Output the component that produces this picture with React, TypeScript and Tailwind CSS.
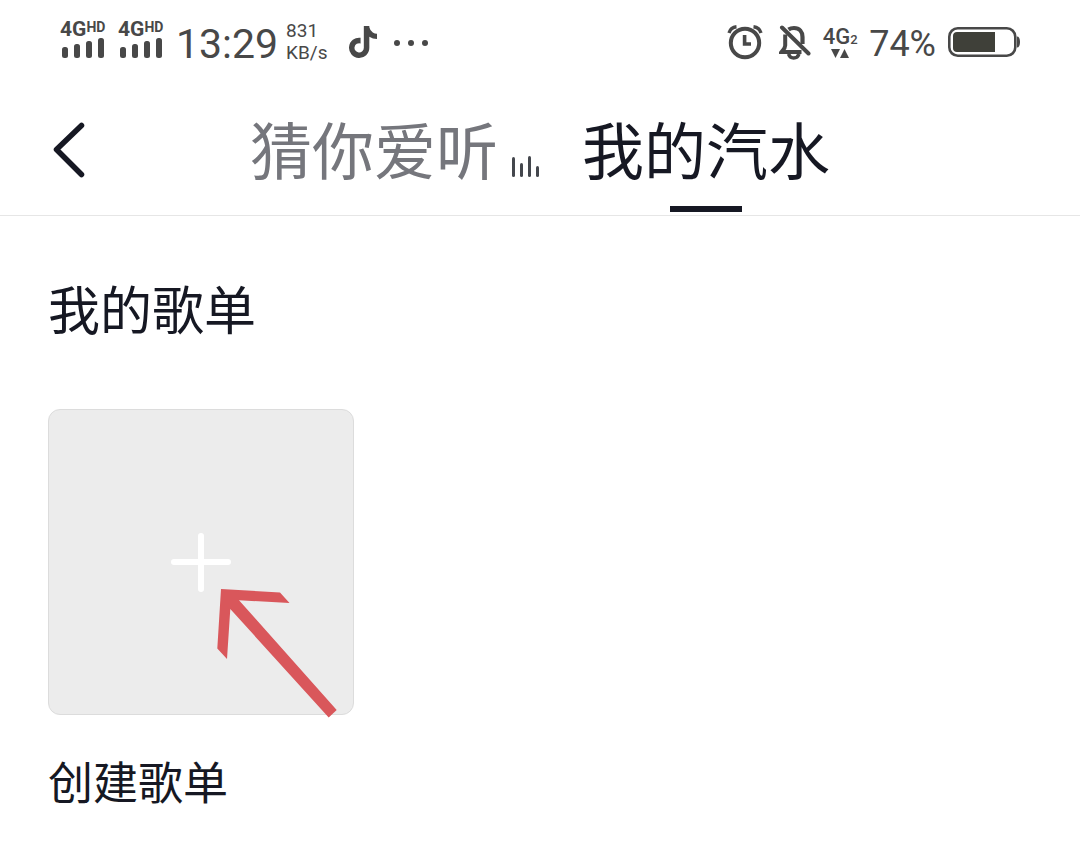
import React, { useState } from 'react';
import { FaTiktok } from 'react-icons/fa';

const SignalBars: React.FC = () => (
  <div className="flex flex-col w-[46px]">
    <div className="flex items-start font-bold">
      <span className="text-[21px] leading-[18px]">4G</span>
      <span className="text-[14px] leading-[14px]">HD</span>
    </div>
    <svg width="46" height="20" viewBox="0 0 46 20" fill="currentColor" aria-hidden="true">
      <rect x="2" y="9" width="6" height="11" rx="2.5" />
      <rect x="14" y="6" width="6" height="14" rx="2.5" />
      <rect x="26" y="3" width="6" height="17" rx="2.5" />
      <rect x="38" y="0" width="6" height="20" rx="2.5" />
    </svg>
  </div>
);

const AlarmIcon: React.FC = () => (
  <svg width="36" height="36" viewBox="0 0 36 36" fill="none" stroke="currentColor" aria-hidden="true">
    <circle cx="18" cy="19" r="14.2" strokeWidth="4" />
    <path d="M17.6 11v9h6.4" strokeWidth="3.6" />
    <path d="M2 9C3 5.500 5.500 3.200 9.500 2.800" strokeWidth="3.4" />
    <path d="M34 9C33 5.500 30.500 3.200 26.500 2.800" strokeWidth="3.4" />
  </svg>
);

const BellOffIcon: React.FC = () => (
  <svg width="32" height="36" viewBox="0 0 32 36" fill="none" stroke="currentColor" aria-hidden="true">
    <path d="M3 3.500L29.500 29.500" strokeWidth="4" strokeLinecap="round" />
    <path d="M9.500 5.500C11.300 4.300 13 4 15 4C20.500 4 23.500 8 23.500 13v7" strokeWidth="4.2" />
    <path d="M6.200 10.500v11c0 2.500-1.700 4-3.700 6.500H22.500" strokeWidth="4" />
    <path d="M9.500 30c1 2.800 2.800 4 5.200 4s4.300-1.200 5.300-4" strokeWidth="3.6" />
  </svg>
);

const BatteryIcon: React.FC = () => (
  <svg width="72" height="30" viewBox="0 0 72 30" aria-hidden="true">
    <rect x="1.300" y="1.300" width="66" height="27.400" rx="8.500" fill="none" stroke="#484848" strokeWidth="2.600" />
    <path d="M9 5H47V25H9C6.500 25 5 23.500 5 21V9C5 6.500 6.500 5 9 5Z" fill="#3f4039" />
    <path d="M69 9.500C71 9.500 72 11.500 72 15S71 20.500 69 20.500Z" fill="#484848" />
  </svg>
);

const StatusBar: React.FC = () => (
  <div className="flex items-start justify-between h-[84px] pl-[60px] pr-[60px] pt-5 text-[#484848] font-['Roboto',sans-serif]">
    <div className="flex items-start">
      <SignalBars />
      <div className="ml-3">
        <SignalBars />
      </div>
      <span className="ml-3 text-[41px] leading-[48px]">13:29</span>
      <div className="ml-2 flex flex-col text-[19px] leading-[22px]">
        <span>831</span>
        <span>KB/s</span>
      </div>
      <FaTiktok className="ml-5 mt-1.5 w-[30px] h-8" />
      <svg className="ml-4 mt-5" width="34" height="6" viewBox="0 0 34 6" fill="currentColor" aria-hidden="true">
        <circle cx="3" cy="3" r="3" />
        <circle cx="17" cy="3" r="3" />
        <circle cx="31" cy="3" r="3" />
      </svg>
    </div>

    <div className="flex items-start pt-1">
      <AlarmIcon />
      <div className="ml-4">
        <BellOffIcon />
      </div>
      <div className="ml-3 flex flex-col items-center w-[34px]">
        <div className="flex items-end font-medium">
          <span className="text-[22px] leading-[25px]">4G</span>
          <span className="text-[13px] leading-[18px]">2</span>
        </div>
        <svg width="20" height="9" viewBox="0 0 20 9" fill="currentColor" aria-hidden="true">
          <path d="M1 0H10L5.500 9Z" />
          <path d="M10 9H19L14.500 0Z" />
        </svg>
      </div>
      <span className="ml-3 text-[36px] leading-10">74%</span>
      <div className="ml-3 pt-[3px]">
        <BatteryIcon />
      </div>
    </div>
  </div>
);

const tabs = [
  { id: 'guess', label: '猜你爱听' },
  { id: 'mine', label: '我的汽水' }
];

const App: React.FC = () => {
  const [activeTab, setActiveTab] = useState('mine');

  return (
    <div className="min-h-screen bg-white text-[#161823] font-['Noto_Sans_CJK_SC',sans-serif]">
      <StatusBar />

      {/* Tab header */}
      <header className="grid grid-cols-[1fr_auto_1fr] items-start pt-7 border-b border-[#e6e6e6]">
        <button type="button" aria-label="返回" className="ml-12 mt-2.5 w-10">
          <svg width="40" height="56" viewBox="0 0 40 56" fill="none" stroke="currentColor" strokeWidth="5.500" strokeLinecap="round" strokeLinejoin="round">
            <path d="M33.500 3.500L8.500 27.500L33.500 52.500" />
          </svg>
        </button>

        <nav className="flex items-start gap-[42px]">
          {tabs.map(tab => (
            <div key={tab.id} className="flex items-start">
              <button
                type="button"
                onClick={() => setActiveTab(tab.id)}
                className={`flex flex-col items-center pb-[3px] ${activeTab === tab.id ? 'text-[#161823]' : 'text-[#75767c]'}`}
              >
                <span className="text-[62px] leading-[72px] whitespace-nowrap">{tab.label}</span>
                <span className={`mt-[22px] w-[72px] h-1.5 ${activeTab === tab.id ? 'bg-[#161823]' : 'bg-transparent'}`} />
              </button>
              {tab.id === 'guess' && (
                <svg className="ml-3 mt-11" width="30" height="21" viewBox="0 0 30 21" fill="#44474d" aria-hidden="true">
                  <rect x="2" y="1" width="3" height="20" rx="1.5" />
                  <rect x="10" y="7" width="3" height="14" rx="1.5" />
                  <rect x="18" y="0" width="3" height="21" rx="1.5" />
                  <rect x="26" y="10" width="3" height="11" rx="1.5" />
                </svg>
              )}
            </div>
          ))}
        </nav>
      </header>

      {/* Playlists */}
      <main className="px-12 pt-[60px]">
        <h2 className="text-[52px] leading-[64px]">我的歌单</h2>

        <div className="relative mt-[69px] w-[306px]">
          <button
            type="button"
            aria-labelledby="create-playlist"
            className="flex items-center justify-center w-full aspect-square rounded-xl border border-[#dcdcdc] bg-[#ececec]"
          >
            <svg width="60" height="60" viewBox="0 0 60 60" stroke="white" strokeWidth="6" strokeLinecap="round">
              <path d="M3 30H57M30 4V57" />
            </svg>
          </button>
          <svg className="absolute left-[169px] top-[180px]" width="120" height="129" viewBox="0 0 120 129" fill="#d9575b" aria-hidden="true">
            <path d="M4 0L63 3.500L72.500 14L22 11.200L119.700 121L111.700 128.500L13.300 20L10 70L0.300 59.500Z" />
          </svg>
          <p id="create-playlist" className="mt-[38px] text-[45px] leading-[56px]">创建歌单</p>
        </div>
      </main>
    </div>
  );
};

export default App;
